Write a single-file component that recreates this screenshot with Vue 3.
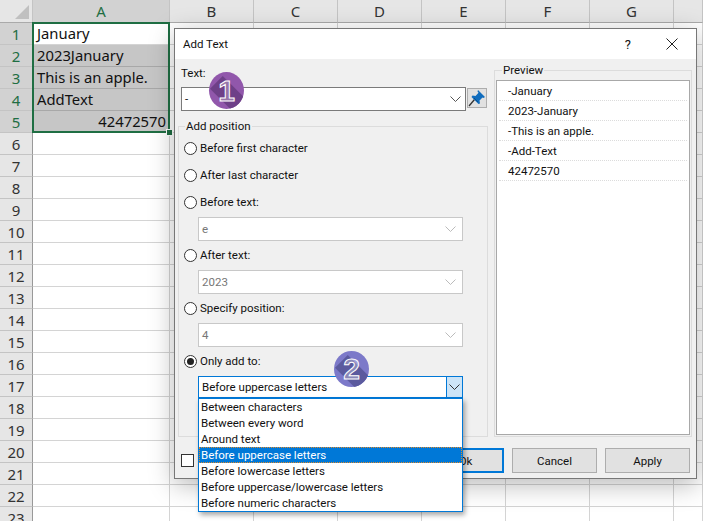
<template>
  <div class="screen">
    <div class="sheet">
      <div class="corner"><span class="corner-tri"></span></div>
      <div
        v-for="(col, i) in columns"
        :key="i"
        class="col-head"
        :class="{ active: i === 0 }"
      >
        {{ col }}
      </div>
      <template v-for="row in rows" :key="row">
        <div class="row-head" :class="{ active: row <= 5 }">{{ row }}</div>
        <div
          v-for="(col, i) in columns"
          :key="i"
          class="cell"
          :class="{
            shaded: i === 0 && row >= 2 && row <= 5,
            num: i === 0 && row === 5,
          }"
        >
          {{ i === 0 ? cells[row - 1] : '' }}
        </div>
      </template>
    </div>

    <div class="selection"><span class="handle"></span></div>

    <div class="dialog">
      <div class="titlebar">
        <span class="title">Add Text</span>
        <span class="help">?</span>
        <svg class="close" width="12" height="12" viewBox="0 0 12 12">
          <path d="M0.5 0.5L11.5 11.5M11.5 0.5L0.5 11.5" stroke="#222" stroke-width="1" fill="none" />
        </svg>
      </div>

      <div class="body">
        <div class="left">
          <div class="text-label">Text:</div>
          <div class="text-line">
            <div class="text-input">
              <span>-</span>
              <svg class="chev" width="11" height="6" viewBox="0 0 11 6">
                <path d="M0.5 0.5L5.5 5.5L10.5 0.5" stroke="#555" fill="none" />
              </svg>
            </div>
            <div class="pin">
              <svg width="18" height="18" viewBox="0 0 18 18">
                <path d="M1 17L6.5 10.5" stroke="#333" stroke-width="1.3" fill="none" />
                <path d="M10 1L17 8L15.5 9L14.5 8.5L11.5 11.5L12 14.5L10.5 15L3.5 8L4.5 6.5L7.5 7L10.5 3.8L9.5 2.5Z" fill="#0f6cbd" />
                <path d="M6 9L10 13" stroke="#074f8f" fill="none" />
              </svg>
            </div>
          </div>

          <fieldset class="group position">
            <legend>Add position</legend>
            <template v-for="opt in positions" :key="opt.label">
              <label class="radio-row">
                <span class="radio" :class="{ on: opt.on }"></span>
                {{ opt.label }}
              </label>
              <div v-if="opt.value" class="combo disabled">
                <span>{{ opt.value }}</span>
                <svg class="chev" width="11" height="6" viewBox="0 0 11 6">
                  <path d="M0.5 0.5L5.5 5.5L10.5 0.5" stroke="#bbb" fill="none" />
                </svg>
              </div>
            </template>
            <div class="combo open">
              <span>Before uppercase letters</span>
              <span class="combo-btn">
                <svg width="11" height="6" viewBox="0 0 11 6">
                  <path d="M0.5 0.5L5.5 5.5L10.5 0.5" stroke="#333" fill="none" />
                </svg>
              </span>
            </div>
          </fieldset>
        </div>

        <fieldset class="group preview">
          <legend>Preview</legend>
          <div class="preview-list">
            <div v-for="line in previewLines" :key="line" class="preview-row">{{ line }}</div>
          </div>
        </fieldset>
      </div>

      <div class="footer">
        <span class="check"></span>
        <div class="buttons">
          <button class="btn primary">Ok</button>
          <button class="btn">Cancel</button>
          <button class="btn">Apply</button>
        </div>
      </div>
    </div>

    <div class="dropdown">
      <div
        v-for="item in dropdownItems"
        :key="item"
        class="drop-item"
        :class="{ selected: item === 'Before uppercase letters' }"
      >
        {{ item }}
      </div>
    </div>

    <div class="badge one"><span>1</span></div>
    <div class="badge two"><span>2</span></div>
  </div>
</template>

<script setup>
const columns = ['A', 'B', 'C', 'D', 'E', 'F', 'G', '']
const rows = Array.from({ length: 23 }, (_, i) => i + 1)
const cells = ['January', '2023January', 'This is an apple.', 'AddText', '42472570']

const positions = [
  { label: 'Before first character' },
  { label: 'After last character' },
  { label: 'Before text:', value: 'e' },
  { label: 'After text:', value: '2023' },
  { label: 'Specify position:', value: '4' },
  { label: 'Only add to:', on: true },
]

const previewLines = ['-January', '2023-January', '-This is an apple.', '-Add-Text', '42472570']

const dropdownItems = [
  'Between characters',
  'Between every word',
  'Around text',
  'Before uppercase letters',
  'Before lowercase letters',
  'Before uppercase/lowercase letters',
  'Before numeric characters',
]
</script>

<style>
html,
body {
  margin: 0;
  overflow: hidden;
}
</style>

<style scoped>
.screen {
  position: relative;
  width: 703px;
  height: 521px;
  overflow: hidden;
  background: #fff;
  font-family: 'Noto Sans', 'Open Sans', sans-serif;
}

.sheet {
  display: grid;
  grid-template-columns: 33px 137px repeat(6, 84px) 29px;
  grid-template-rows: 23px;
  grid-auto-rows: 22px;
  font-size: 14.8px;
  color: #111;
}

.corner {
  position: relative;
  background: #e6e6e6;
  border-right: 1px solid #c4c4c4;
  border-bottom: 1px solid #aaa;
}

.corner-tri {
  position: absolute;
  right: 3px;
  bottom: 3px;
  width: 0;
  height: 0;
  border-style: solid;
  border-width: 0 0 14px 14px;
  border-color: transparent transparent #c0c0c0 transparent;
}

.col-head {
  display: flex;
  align-items: center;
  justify-content: center;
  background: #e6e6e6;
  border-right: 1px solid #c4c4c4;
  border-bottom: 1px solid #aaa;
  font-size: 15px;
  color: #333;
}

.col-head.active {
  background: #d2d2d2;
  color: #1f6e43;
}

.row-head {
  display: flex;
  align-items: center;
  justify-content: center;
  background: #e6e6e6;
  border-right: 1px solid #999;
  border-bottom: 1px solid #c4c4c4;
  font-size: 15px;
  color: #333;
}

.row-head.active {
  background: #d2d2d2;
  color: #1f6e43;
}

.cell {
  display: flex;
  align-items: center;
  padding: 0 3px 2px 4px;
  box-sizing: border-box;
  border-right: 1px solid #d4d4d4;
  border-bottom: 1px solid #d4d4d4;
  white-space: nowrap;
  overflow: hidden;
}

.cell.shaded {
  background: #c6c6c6;
  border-color: #a8a8a8;
}

.cell.num {
  justify-content: flex-end;
}

.selection {
  position: absolute;
  left: 32px;
  top: 22px;
  width: 134px;
  height: 107px;
  border: 2px solid #1f6e43;
}

.handle {
  position: absolute;
  right: -5px;
  bottom: -5px;
  width: 5px;
  height: 5px;
  background: #1f6e43;
  border: 1px solid #fff;
}

.dialog {
  position: absolute;
  left: 174px;
  top: 28px;
  width: 521px;
  height: 449px;
  display: flex;
  flex-direction: column;
  background: #f0f0f0;
  border: 1px solid #777;
  box-shadow: 0 6px 24px rgba(0, 0, 0, 0.28);
  font-family: Roboto, 'Noto Sans', sans-serif;
  font-size: 11.5px;
  color: #111;
}

.titlebar {
  display: flex;
  align-items: center;
  height: 30px;
  padding: 0 18px 0 8px;
  background: #fff;
}

.title {
  flex: 1;
}

.help {
  margin-right: 35px;
  font-size: 13px;
}

.body {
  display: flex;
  padding-left: 3px;
  padding-right: 3px;
}

.left {
  width: 310px;
  margin-right: 6px;
  flex: none;
}

.text-label {
  padding: 6px 0 0 3px;
  height: 22px;
  box-sizing: border-box;
  line-height: 16px;
}

.text-line {
  display: flex;
  align-items: flex-start;
  margin: 6px 0 0 3px;
}

.text-input {
  display: flex;
  align-items: center;
  justify-content: space-between;
  box-sizing: border-box;
  width: 285px;
  height: 24px;
  padding: 0 4px 0 3px;
  background: #fff;
  border: 1px solid #7a7a7a;
}

.pin {
  display: flex;
  align-items: center;
  justify-content: center;
  box-sizing: border-box;
  width: 20px;
  height: 20px;
  margin: 1px 0 0 1px;
  background: #e1e1e1;
  border: 1px solid #adadad;
}

.group {
  position: relative;
  margin: 0;
  padding: 0;
  min-width: 0;
  box-sizing: border-box;
  border: 1px solid #dcdcdc;
}

.group legend {
  padding: 0 1px;
  margin-left: 6px;
  line-height: 15px;
}

.position {
  height: 318px;
  margin-top: 8px;
  padding: 0 0 0 5px;
}

.position legend {
  margin-left: 1px;
}

.radio-row {
  display: flex;
  align-items: center;
  gap: 3px;
  height: 20px;
  margin-top: 7px;
}

.position legend + .radio-row {
  margin-top: 4px;
}

.combo + .radio-row {
  margin-top: 4px;
}

.radio {
  position: relative;
  flex: none;
  box-sizing: border-box;
  width: 13px;
  height: 13px;
  background: #fff;
  border: 1px solid #333;
  border-radius: 50%;
}

.radio.on::after {
  content: '';
  position: absolute;
  left: 2px;
  top: 2px;
  width: 7px;
  height: 7px;
  background: #222;
  border-radius: 50%;
}

.combo {
  display: flex;
  align-items: center;
  justify-content: space-between;
  box-sizing: border-box;
  width: 265px;
  height: 24px;
  margin: 5px 0 0 14px;
  padding: 0 6px 0 3px;
  background: #fff;
  border: 1px solid #c8c8c8;
}

.combo.disabled {
  color: #777;
}

.combo.open {
  height: 22px;
  padding: 0 0 0 3px;
  margin-top: 5px;
  border-color: #0078d7;
}

.combo-btn {
  display: flex;
  align-items: center;
  justify-content: center;
  width: 15px;
  height: 100%;
  background: #cce4f7;
  border-left: 1px solid #0078d7;
}

.preview {
  width: 198px;
  height: 374px;
  margin-top: 4px;
  padding: 2px 1px 0;
}

.preview-list {
  box-sizing: border-box;
  height: 355px;
  background: #fff;
  border: 1px solid #a8a8a8;
}

.preview-row {
  display: flex;
  align-items: center;
  box-sizing: border-box;
  height: 20px;
  margin: 0 2px;
  padding-left: 9px;
  border-bottom: 1px dotted #dcdcdc;
}

.footer {
  display: flex;
  align-items: center;
  justify-content: space-between;
  padding: 11px 6px 0 6px;
}

.check {
  box-sizing: border-box;
  width: 13px;
  height: 13px;
  background: #fff;
  border: 1px solid #333;
}

.buttons {
  display: flex;
  gap: 8px;
}

.btn {
  box-sizing: border-box;
  width: 85px;
  height: 25px;
  padding: 0;
  background: #e1e1e1;
  border: 1px solid #adadad;
  font: inherit;
  color: #111;
}

.btn.primary {
  width: 77px;
  border: 2px solid #0078d7;
}

.dropdown {
  position: absolute;
  left: 198px;
  top: 398px;
  width: 265px;
  box-sizing: border-box;
  background: #fff;
  border: 1px solid #0078d7;
  box-shadow: 2px 3px 5px rgba(0, 0, 0, 0.35);
  font-family: Roboto, 'Noto Sans', sans-serif;
  font-size: 11.5px;
  color: #111;
}

.drop-item {
  height: 16px;
  padding-left: 2px;
  line-height: 16px;
  white-space: nowrap;
}

.drop-item.selected {
  background: #0078d7;
  color: #fff;
  outline: 1px dotted #e08a2a;
  outline-offset: -1px;
}

.badge {
  position: absolute;
  display: flex;
  align-items: center;
  justify-content: center;
  width: 35px;
  border-radius: 50%;
  overflow: hidden;
  font-family: 'Liberation Sans', sans-serif;
  font-size: 30px;
  font-weight: 700;
  color: rgba(255, 255, 255, 0.3);
  -webkit-text-stroke: 1px #fff;
}

.badge::before {
  content: '';
  position: absolute;
  left: 9px;
  top: 6px;
  width: 18px;
  height: 50px;
  transform: rotate(-45deg);
  transform-origin: 50% 30%;
}

.badge span {
  position: relative;
}

.badge.one {
  left: 209px;
  top: 72px;
  height: 37px;
  background: #9157ab;
}

.badge.one::before {
  background: #6e4088;
}

.badge.two {
  left: 334px;
  top: 351px;
  height: 36px;
  background: #7c79c9;
}

.badge.two::before {
  background: #5b5a9e;
}

.chev {
  flex: none;
}
</style>
